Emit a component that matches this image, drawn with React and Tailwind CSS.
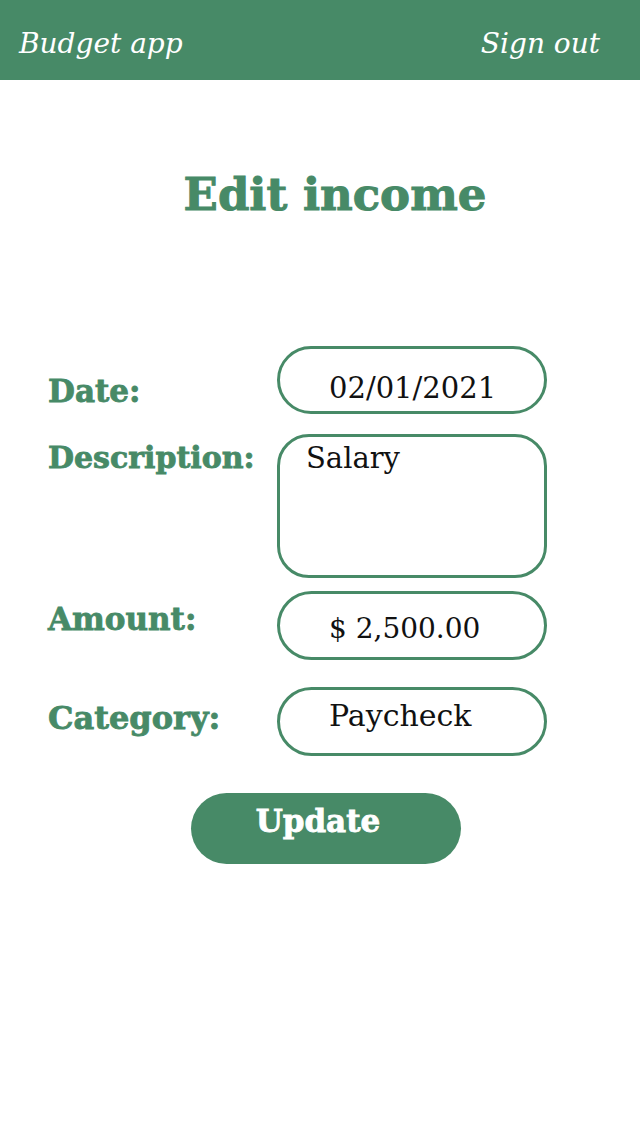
import React from 'react';

const green = 'text-[#478a67]';

const Field = ({ label, labelClass, boxClass, children }) => (
  <div className="flex items-start">
    <div className={`w-[229px] shrink-0 font-bold leading-none [-webkit-text-stroke:0.8px_#478a67] ${green} ${labelClass}`}>{label}</div>
    <div className={`w-[270px] border-[3px] border-[#478a67] text-[#111] leading-none ${boxClass}`}>
      {children}
    </div>
  </div>
);

export default function App() {
  return (
    <div className="min-h-[1136px] bg-white" style={{ fontFamily: '"DejaVu Serif", serif' }}>
      <header className="h-[80px] bg-[#478a67] flex items-start justify-between pl-[19px] pr-[40px] pt-[30px] text-white italic text-[28px] leading-none">
        <span>Budget app</span>
        <span>Sign out</span>
      </header>

      <h1 className={`mt-[92px] pl-[30px] text-center font-bold text-[45px] leading-none [-webkit-text-stroke:1px_#478a67] ${green}`}>Edit income</h1>

      <div className="mt-[129px] pl-[48px] flex flex-col">
        <Field label="Date:" labelClass="text-[31px] mt-[30px]" boxClass="h-[68px] rounded-full pl-[49px] pt-[25px] text-[29px]">
          02/01/2021
        </Field>
        <div className="h-[20px]" />
        <Field label="Description:" labelClass="text-[30px] mt-[9px]" boxClass="h-[144px] rounded-[32px] pl-[26px] pt-[7px] text-[29px]">
          Salary
        </Field>
        <div className="h-[13px]" />
        <Field label="Amount:" labelClass="text-[31px] mt-[13px]" boxClass="h-[69px] rounded-full pl-[49px] pt-[21px] text-[28px]">
          $ 2,500.00
        </Field>
        <div className="h-[27px]" />
        <Field label="Category:" labelClass="text-[32px] mt-[15px]" boxClass="h-[69px] rounded-full pl-[49px] pt-[11px] text-[30px]">
          Paycheck
        </Field>
      </div>

      <div className="mt-[37px] pl-[191px]">
        <button className="w-[270px] h-[71px] rounded-full bg-[#478a67] text-white font-bold text-[31px] leading-none pt-[13px] pr-[16px] flex justify-center items-start [-webkit-text-stroke:0.8px_white]">
          Update
        </button>
      </div>
    </div>
  );
}
